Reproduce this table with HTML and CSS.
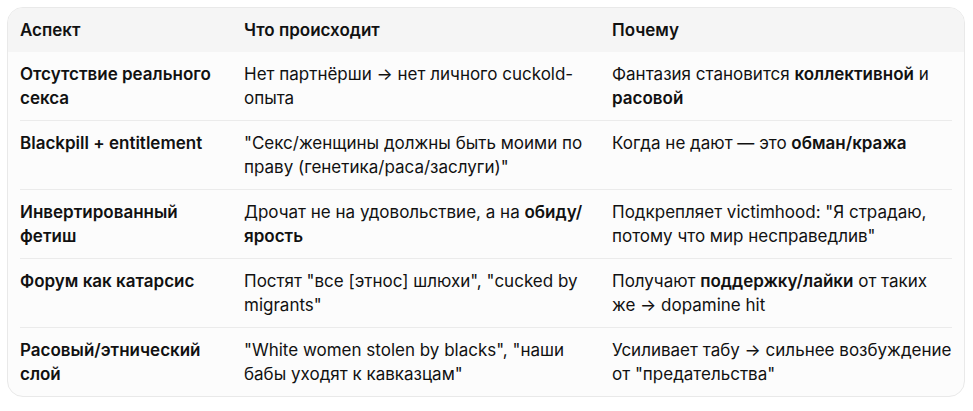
FILE: index.html
```html
<!DOCTYPE html>
<html lang="ru">
<head>
<meta charset="utf-8">
<link rel="stylesheet" href="styles.css">
</head>
<body>
<div class="card">
  <div class="head">
    <div class="row hrow">
      <div class="cell">Аспект</div>
      <div class="cell">Что происходит</div>
      <div class="cell">Почему</div>
    </div>
  </div>
  <div class="body">
    <div class="row">
      <div class="cell b">Отсутствие реального секса</div>
      <div class="cell">Нет партнёрши → нет личного cuckold-опыта</div>
      <div class="cell">Фантазия становится <b>коллективной</b> и <b>расовой</b></div>
    </div>
    <div class="row">
      <div class="cell b">Blackpill + entitlement</div>
      <div class="cell">"Секс/женщины должны быть моими по праву (генетика/раса/заслуги)"</div>
      <div class="cell">Когда не дают — это <b>обман/кража</b></div>
    </div>
    <div class="row">
      <div class="cell b">Инвертированный фетиш</div>
      <div class="cell">Дрочат не на удовольствие, а на <b>обиду/ ярость</b></div>
      <div class="cell">Подкрепляет victimhood: "Я страдаю, потому что мир несправедлив"</div>
    </div>
    <div class="row">
      <div class="cell b">Форум как катарсис</div>
      <div class="cell">Постят "все [этнос] шлюхи", "cucked by migrants"</div>
      <div class="cell">Получают <b>поддержку/лайки</b> от таких же → dopamine hit</div>
    </div>
    <div class="row">
      <div class="cell b">Расовый/этнический слой</div>
      <div class="cell">"White women stolen by blacks", "наши бабы уходят к кавказцам"</div>
      <div class="cell">Усиливает табу → сильнее возбуждение от "предательства"</div>
    </div>
  </div>
</div>
</body>
</html>
```

FILE: styles.css
```css
html, body {
  margin: 0;
  background: #ffffff;
}
body {
  padding: 7px;
  font-family: Inter, "Noto Sans", sans-serif;
  font-size: 17px;
  line-height: 24px;
  color: #111111;
}
.card {
  width: 956px;
  border: 1px solid #e9e9e9;
  border-radius: 16px;
  background: #fcfcfc;
  overflow: hidden;
}
.head {
  background: #f5f5f5;
  padding: 0 12px;
}
.body {
  padding: 0 12px;
}
.row {
  display: grid;
  grid-template-columns: 224px 368px 1fr;
  padding: 10px 0;
  border-bottom: 1px solid #ebebeb;
}
.hrow {
  border-bottom: none;
  font-weight: 600;
}
.body .row:last-child {
  border-bottom: none;
}
.cell {
  padding-right: 20px;
}
.cell:last-child {
  padding-right: 0;
}
.b, b {
  font-weight: 600;
}
```
